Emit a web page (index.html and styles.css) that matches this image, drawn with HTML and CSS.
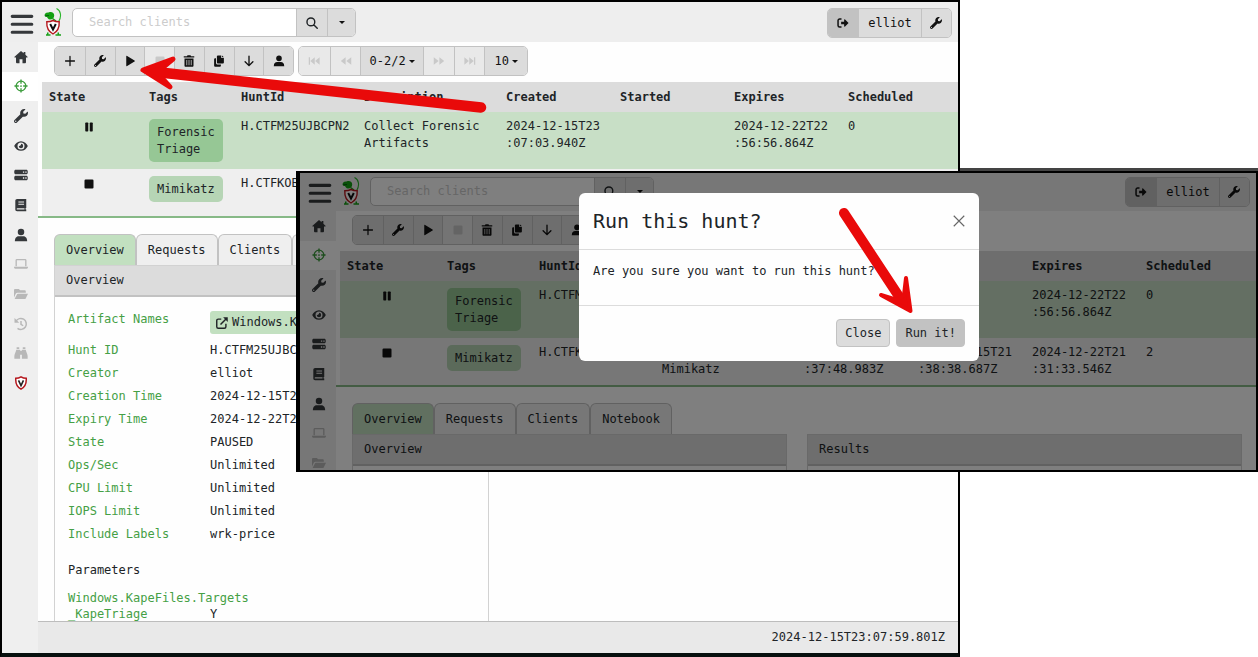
FILE: index.html
```html
<!DOCTYPE html>
<html lang="en">
<head>
<meta charset="utf-8">
<title>Velociraptor hunts</title>
<link rel="stylesheet" href="styles.css">
</head>
<body>
<svg class="sprite" aria-hidden="true">
  <symbol id="i-home" viewBox="0 0 16 16"><path d="M8 1 .6 7.700c-.4.5-.1 1 .5 1h1.200V14c0 .6.4 1 1 1h3v-4.500h3.400V15h3c.6 0 1-.4 1-1V8.700h1.200c.6 0 .9-.5.5-1L13 5.300V2.200h-2v1.400z"/></symbol>
  <symbol id="i-target" viewBox="0 0 16 16"><g fill="none" stroke="currentColor" stroke-width="1.500"><circle cx="8" cy="8" r="5.500"/><path d="M8 .5v5M8 10.500v5M.5 8h5M10.500 8h5"/></g><circle cx="8" cy="8" r="1"/></symbol>
  <symbol id="i-wrench" viewBox="0 0 512 512"><path fill-rule="evenodd" d="M507.730 109.100c-2.240-9.030-13.540-12.090-20.120-5.510l-74.360 74.360-67.880-11.310-11.310-67.880 74.360-74.360c6.620-6.620 3.430-17.900-5.660-20.160-47.380-11.740-99.550.91-136.580 37.930-39.640 39.640-50.550 97.100-34.050 147.200L18.740 402.760c-24.990 24.990-24.990 65.510 0 90.500 24.990 24.990 65.510 24.990 90.500 0l213.210-213.210c50.120 16.710 107.470 5.680 147.370-34.220 37.070-37.070 49.700-89.320 37.910-136.730zM64 472c-13.250 0-24-10.750-24-24s10.750-24 24-24 24 10.740 24 24-10.750 24-24 24z"/></symbol>
  <symbol id="i-eye" viewBox="0 0 16 16"><path fill-rule="evenodd" d="M8 2.500C4.300 2.500 1.500 5 .2 8c1.300 3 4.100 5.500 7.800 5.500S14.500 11 15.800 8C14.500 5 11.700 2.500 8 2.500zM8 4a4 4 0 1 1 0 8 4 4 0 0 1 0-8zM8 5.500c.2 1.600-.8 2.700-2.500 2.500A2.500 2.500 0 1 0 8 5.500z"/></symbol>
  <symbol id="i-server" viewBox="0 0 16 16"><path fill-rule="evenodd" d="M2 2h12c1 0 1.700.7 1.700 1.700v1.800c0 1-.7 1.700-1.700 1.700H2C1 7.200.3 6.500.3 5.500V3.700C.3 2.700 1 2 2 2zm8.200 1.900v1.500h1.500V3.900zm2.700 0v1.500h1.500V3.900zM2 8.800h12c1 0 1.700.7 1.700 1.700v1.800c0 1-.7 1.700-1.700 1.700H2c-1 0-1.700-.7-1.700-1.700v-1.800c0-1 .7-1.700 1.700-1.700zm8.200 1.900v1.500h1.500v-1.500zm2.700 0v1.500h1.500v-1.500z"/></symbol>
  <symbol id="i-book" viewBox="0 0 16 16"><path fill-rule="evenodd" d="M3.500 1H14v10.500h-.7V13h.7v2H3.500C2.300 15 1.500 14 1.500 13V3c0-1.100.9-2 2-2zM5 4v1.200h6.500V4zm0 2.500v1.200h6.500V6.500zM3.800 11.600c-1 0-1 1.600 0 1.600h8.200v-1.600z"/></symbol>
  <symbol id="i-user" viewBox="0 0 16 16"><circle cx="8" cy="4.500" r="3.700"/><path d="M1 15c0-4 2-5.600 4.500-5.600h5C13 9.400 15 11 15 15z"/></symbol>
  <symbol id="i-laptop" viewBox="0 0 16 16"><path d="M2.500 10.500V3.800c0-.5.3-.8.8-.8h9.400c.5 0 .8.3.8.8v6.700" fill="none" stroke="currentColor" stroke-width="1.500"/><path d="M0 11h16v.8c0 1-.8 1.700-1.700 1.700H1.700C.8 13.500 0 12.800 0 11.800z"/></symbol>
  <symbol id="i-folder" viewBox="0 0 16 16"><path d="M0 12V3.500c0-.8.6-1.300 1.300-1.300H5.500L7 3.800h5.200c.7 0 1.300.5 1.300 1.300v1.400H4c-.9 0-1.600.5-2 1.200zM.7 13.800 3.300 8.500c.2-.5.6-.8 1.200-.8H16l-2.600 5.300c-.2.5-.7.8-1.300.8z"/></symbol>
  <symbol id="i-history" viewBox="0 0 16 16"><path d="M2.200 5A6.300 6.300 0 1 1 4 13M8 4.500V8.300l2.500 1.700" fill="none" stroke="currentColor" stroke-width="1.700"/><path d="M.6 1v5.500H6z"/></symbol>
  <symbol id="i-bino" viewBox="0 0 16 16"><path d="M3 1.500h3v2H3zM10 1.500h3v2h-3zM2.600 4.200h3.800c.3 0 .6.3.6.6V14.500H.4v-3C.6 9 2 7 2.600 4.200zM13.400 4.200H9.600c-.3 0-.6.3-.6.6V14.500h6.600v-3c-.2-2.500-1.600-4.500-2.200-7.300zM7 5.500h2v4.500H7z"/></symbol>
  <symbol id="i-shield" viewBox="0 0 16 16"><path d="M8 1c2 1.300 4 1.700 6 1.700.3 5.300-1.500 10-6 12.300C3.500 12.700 1.700 8 2 2.700 4 2.700 6 2.300 8 1z" fill="#fff" stroke="#b5171d" stroke-width="1.700"/><path d="m5.200 5 2.800 6 2.800-6" fill="none" stroke="#222" stroke-width="1.800"/></symbol>
  <symbol id="i-plus" viewBox="0 0 16 16"><path d="M8 2v12M2 8h12" fill="none" stroke="currentColor" stroke-width="1.700" stroke-linecap="round"/></symbol>
  <symbol id="i-play" viewBox="0 0 16 16"><path d="M3 1.800v12.400c0 .6.600 1 1.200.6l9.800-6c.6-.4.6-1.200 0-1.600l-9.800-6C3.600.8 3 1.200 3 1.800z"/></symbol>
  <symbol id="i-stop" viewBox="0 0 16 16"><rect x="2" y="2" width="12" height="12" rx="1.500"/></symbol>
  <symbol id="i-pause" viewBox="0 0 16 16"><rect x="3" y="2" width="4" height="12" rx="1"/><rect x="9" y="2" width="4" height="12" rx="1"/></symbol>
  <symbol id="i-trash" viewBox="0 0 16 16"><path fill-rule="evenodd" d="M1 1.500h4.300L6 .3h4l.7 1.200H15v1.800H1zM2 4.500h12v9.800c0 .9-.6 1.500-1.500 1.500h-9C2.600 15.800 2 15.200 2 14.300zm2.600 2v7.300h1V6.500zm2.900 0v7.300h1V6.500zm2.900 0v7.300h1V6.500z"/></symbol>
  <symbol id="i-copy" viewBox="0 0 16 16"><path d="M6.500.5H11V4h3.500v6c0 .8-.5 1.300-1.300 1.300H6.500c-.8 0-1.300-.5-1.300-1.300V1.800C5.200 1 5.700.5 6.500.5zM12 .5 14.500 3H12zM1.500 5.700c0-.8.5-1.300 1.300-1.300H4V10.500c0 1.100.9 2 2 2h4.500v1.700c0 .8-.5 1.300-1.300 1.300H2.800c-.8 0-1.300-.5-1.300-1.300z"/></symbol>
  <symbol id="i-down" viewBox="0 0 16 16"><path d="M8 1.500v12.500M2.800 9 8 14.200 13.200 9" fill="none" stroke="currentColor" stroke-width="1.800" stroke-linecap="round"/></symbol>
  <symbol id="i-search" viewBox="0 0 16 16"><path d="M6.500 1.300a5.200 5.200 0 1 1 0 10.400 5.200 5.200 0 0 1 0-10.400zM10.300 10.300 15 15" fill="none" stroke="currentColor" stroke-width="1.900" stroke-linecap="round"/></symbol>
  <symbol id="i-exit" viewBox="0 0 16 16"><path d="M6 2.700H3.500C2.300 2.700 1.400 3.500 1.400 4.700v6.600c0 1.200.9 2 2.100 2H6" fill="none" stroke="currentColor" stroke-width="2"/><path d="M5.500 6.400h4V4c0-.8.8-1.100 1.300-.6L15.400 8l-4.600 4.600c-.5.5-1.300.2-1.300-.6V9.600h-4z"/></symbol>
  <symbol id="i-first" viewBox="0 0 16 16"><path d="M1 3h1.700v10H1zM9 3v10L3 8zM15.500 3v10l-6-5z"/></symbol>
  <symbol id="i-prev" viewBox="0 0 16 16"><path d="M7.500 3v10l-6.500-5zM15 3v10L8.500 8z"/></symbol>
  <symbol id="i-next" viewBox="0 0 16 16"><path d="M8.500 3v10L15 8zM1 3v10l6.500-5z"/></symbol>
  <symbol id="i-last" viewBox="0 0 16 16"><path d="M15 3h-1.700v10H15zM7 3v10l6-5zM.5 3v10l6-5z"/></symbol>
  <symbol id="i-external" viewBox="0 0 16 16"><path d="M7 2.800H3C1.800 2.800 1 3.600 1 4.800V13c0 1.200.8 2 2 2h8.200c1.200 0 2-.8 2-2V9M6 10l8-8" fill="none" stroke="currentColor" stroke-width="1.900"/><path d="M9.500.3h6.200v6.200z"/></symbol>
  <symbol id="i-close" viewBox="0 0 16 16"><path d="m2 2 12 12M14 2 2 14" fill="none" stroke="currentColor" stroke-width="1.300"/></symbol>
  <symbol id="i-menu" viewBox="0 0 22 20"><path d="M2 3h18M2 10.200h18M2 17.500h18" fill="none" stroke="currentColor" stroke-width="2.800" stroke-linecap="round"/></symbol>
  <symbol id="i-logo" viewBox="0 0 18 28"><path d="M12.500.5c4.500 2 5.200 8 2.200 13" fill="none" stroke="#2bb52b" stroke-width="1.100"/><path d="M.6 7C1 4.500 3.500 4.600 5 4.200c3-.7 5.300.6 5.200 3.300 0 2.700-2 4.100-4.300 4C4.200 11.400 3.500 10 3 9 1.500 9 .4 8.500.6 7z" fill="#12a012"/><path d="M1.200 7.700 5 7.500" stroke="#064e12" stroke-width=".8"/><path d="M8.500 10.500 12 13M4 24.500l-.5 2M14 24.500l.5 2M2 27h4.500M11.500 27h5.500" fill="none" stroke="#19a019" stroke-width="1.500"/><path d="M9 12.500c2 1 4 1.300 6.200 1.300.3 5.200-1.700 9.800-6.200 12.200-4.500-2.400-6.500-7-6.200-12.200C5 13.800 7 13.500 9 12.500z" fill="#fff" stroke="#b5171d" stroke-width="1.400"/><path d="m6.200 16 2.800 5.500 2.800-5.500" fill="none" stroke="#111" stroke-width="2"/></symbol>
</svg>

<main class="desktop">
  <section class="window window-back" aria-label="Hunt manager">
    <header class="topbar">
      <button class="plain" aria-label="Menu"><svg class="menu-icon"><use href="#i-menu"/></svg></button>
      <svg class="logo"><use href="#i-logo"/></svg>
      <form class="search">
        <input type="text" placeholder="Search clients" aria-label="Search clients">
        <button type="button" aria-label="Search"><svg class="icon"><use href="#i-search"/></svg></button>
        <button type="button" class="narrow" aria-label="Search options"><span class="caret"></span></button>
      </form>
      <div class="group account">
        <button class="dark" aria-label="Log out"><svg class="icon"><use href="#i-exit"/></svg></button>
        <button class="wide">elliot</button>
        <button aria-label="Settings"><svg class="icon"><use href="#i-wrench"/></svg></button>
      </div>
    </header>
    <div class="body">
      <nav class="sidebar">
        <div class="links">
          <a href="#" aria-label="Home"><svg class="icon"><use href="#i-home"/></svg></a>
          <a href="#" class="active" aria-label="Hunts"><svg class="icon"><use href="#i-target"/></svg></a>
          <a href="#" aria-label="Artifacts"><svg class="icon"><use href="#i-wrench"/></svg></a>
          <a href="#" aria-label="Events"><svg class="icon"><use href="#i-eye"/></svg></a>
          <a href="#" aria-label="Server"><svg class="icon"><use href="#i-server"/></svg></a>
          <a href="#" aria-label="Notebooks"><svg class="icon"><use href="#i-book"/></svg></a>
          <a href="#" aria-label="Users"><svg class="icon"><use href="#i-user"/></svg></a>
          <a href="#" class="off" aria-label="Host"><svg class="icon"><use href="#i-laptop"/></svg></a>
          <a href="#" class="off" aria-label="Files"><svg class="icon"><use href="#i-folder"/></svg></a>
          <a href="#" class="off" aria-label="History"><svg class="icon"><use href="#i-history"/></svg></a>
          <a href="#" class="off" aria-label="Monitoring"><svg class="icon"><use href="#i-bino"/></svg></a>
          <a href="#" aria-label="About"><svg class="icon"><use href="#i-shield"/></svg></a>
        </div>
      </nav>
      <div class="content">
        <div class="toolbar">
          <div class="group">
            <button aria-label="New hunt"><svg class="icon"><use href="#i-plus"/></svg></button>
            <button aria-label="Modify hunt"><svg class="icon"><use href="#i-wrench"/></svg></button>
            <button aria-label="Run hunt"><svg class="icon"><use href="#i-play"/></svg></button>
            <button disabled aria-label="Stop hunt"><svg class="icon"><use href="#i-stop"/></svg></button>
            <button aria-label="Delete hunt"><svg class="icon"><use href="#i-trash"/></svg></button>
            <button aria-label="Copy hunt"><svg class="icon"><use href="#i-copy"/></svg></button>
            <button aria-label="Download"><svg class="icon"><use href="#i-down"/></svg></button>
            <button aria-label="Owner"><svg class="icon"><use href="#i-user"/></svg></button>
          </div>
          <div class="group pager">
            <button disabled aria-label="First page"><svg class="icon"><use href="#i-first"/></svg></button>
            <button disabled aria-label="Previous page"><svg class="icon"><use href="#i-prev"/></svg></button>
            <button class="wide">0-2/2<span class="caret"></span></button>
            <button disabled aria-label="Next page"><svg class="icon"><use href="#i-next"/></svg></button>
            <button disabled aria-label="Last page"><svg class="icon"><use href="#i-last"/></svg></button>
            <button class="size">10<span class="caret"></span></button>
          </div>
        </div>
        <div class="table-wrap">
          <table>
            <colgroup><col class="c-state"><col class="c-tags"><col class="c-id"><col class="c-desc"><col class="c-time"><col class="c-time"><col class="c-time"><col></colgroup>
            <thead><tr><th>State</th><th>Tags</th><th>HuntId</th><th>Description</th><th>Created</th><th>Started</th><th>Expires</th><th>Scheduled</th></tr></thead>
            <tbody>
              <tr class="selected"><td class="state"><svg class="icon"><use href="#i-pause"/></svg></td><td><span class="tag strong">Forensic<br>Triage</span></td><td>H.CTFM25UJBCPN2</td><td>Collect Forensic<br>Artifacts</td><td>2024-12-15T23<br>:07:03.940Z</td><td></td><td>2024-12-22T22<br>:56:56.864Z</td><td>0</td></tr>
              <tr><td class="state"><svg class="icon"><use href="#i-stop"/></svg></td><td><span class="tag">Mimikatz</span></td><td>H.CTFKOB</td><td><br>Mimikatz</td><td><br>:37:48.983Z</td><td>2024-12-15T21<br>:38:38.687Z</td><td>2024-12-22T21<br>:31:33.546Z</td><td>2</td></tr>
            </tbody>
          </table>
        </div>
        <div class="details">
          <div class="tabs" role="tablist">
            <button role="tab" aria-selected="true">Overview</button><button role="tab">Requests</button><button role="tab">Clients</button><button role="tab">Notebook</button>
          </div>
          <div class="cards">
            <section class="card">
              <h2>Overview</h2>
              <dl>
                <dt>Artifact Names</dt><dd class="artifact"><button><svg class="icon"><use href="#i-external"/></svg>Windows.Ka</button></dd>
                <dt>Hunt ID</dt><dd>H.CTFM25UJBCPN2</dd>
                <dt>Creator</dt><dd>elliot</dd>
                <dt>Creation Time</dt><dd>2024-12-15T23</dd>
                <dt>Expiry Time</dt><dd>2024-12-22T22</dd>
                <dt>State</dt><dd>PAUSED</dd>
                <dt>Ops/Sec</dt><dd>Unlimited</dd>
                <dt>CPU Limit</dt><dd>Unlimited</dd>
                <dt>IOPS Limit</dt><dd>Unlimited</dd>
                <dt>Include Labels</dt><dd>wrk-price</dd>
              </dl>
              <h3>Parameters</h3>
              <dl class="params"><dt>Windows.KapeFiles.Targets<br>_KapeTriage</dt><dd>Y</dd></dl>
            </section>
            <section class="card short"><h2>Results</h2></section>
          </div>
        </div>
        <footer class="status">2024-12-15T23:07:59.801Z</footer>
      </div>
    </div>
  </section>

  <section class="window window-front" aria-label="Run hunt confirmation">
    <header class="topbar">
      <button class="plain" aria-label="Menu"><svg class="menu-icon"><use href="#i-menu"/></svg></button>
      <svg class="logo"><use href="#i-logo"/></svg>
      <form class="search">
        <input type="text" placeholder="Search clients" aria-label="Search clients">
        <button type="button" aria-label="Search"><svg class="icon"><use href="#i-search"/></svg></button>
        <button type="button" class="narrow" aria-label="Search options"><span class="caret"></span></button>
      </form>
      <div class="group account">
        <button class="dark" aria-label="Log out"><svg class="icon"><use href="#i-exit"/></svg></button>
        <button class="wide">elliot</button>
        <button aria-label="Settings"><svg class="icon"><use href="#i-wrench"/></svg></button>
      </div>
    </header>
    <div class="body">
      <nav class="sidebar">
        <div class="links">
          <a href="#" aria-label="Home"><svg class="icon"><use href="#i-home"/></svg></a>
          <a href="#" class="active" aria-label="Hunts"><svg class="icon"><use href="#i-target"/></svg></a>
          <a href="#" aria-label="Artifacts"><svg class="icon"><use href="#i-wrench"/></svg></a>
          <a href="#" aria-label="Events"><svg class="icon"><use href="#i-eye"/></svg></a>
          <a href="#" aria-label="Server"><svg class="icon"><use href="#i-server"/></svg></a>
          <a href="#" aria-label="Notebooks"><svg class="icon"><use href="#i-book"/></svg></a>
          <a href="#" aria-label="Users"><svg class="icon"><use href="#i-user"/></svg></a>
          <a href="#" class="off" aria-label="Host"><svg class="icon"><use href="#i-laptop"/></svg></a>
          <a href="#" class="off" aria-label="Files"><svg class="icon"><use href="#i-folder"/></svg></a>
        </div>
      </nav>
      <div class="content">
        <div class="toolbar">
          <div class="group">
            <button aria-label="New hunt"><svg class="icon"><use href="#i-plus"/></svg></button>
            <button aria-label="Modify hunt"><svg class="icon"><use href="#i-wrench"/></svg></button>
            <button aria-label="Run hunt"><svg class="icon"><use href="#i-play"/></svg></button>
            <button disabled aria-label="Stop hunt"><svg class="icon"><use href="#i-stop"/></svg></button>
            <button aria-label="Delete hunt"><svg class="icon"><use href="#i-trash"/></svg></button>
            <button aria-label="Copy hunt"><svg class="icon"><use href="#i-copy"/></svg></button>
            <button aria-label="Download"><svg class="icon"><use href="#i-down"/></svg></button>
            <button aria-label="Owner"><svg class="icon"><use href="#i-user"/></svg></button>
          </div>
        </div>
        <div class="table-wrap">
          <table>
            <colgroup><col class="c-state"><col class="c-tags"><col class="c-id"><col class="c-desc"><col class="c-time"><col class="c-time"><col class="c-time"><col></colgroup>
            <thead><tr><th>State</th><th>Tags</th><th>HuntId</th><th></th><th></th><th></th><th>Expires</th><th>Scheduled</th></tr></thead>
            <tbody>
              <tr class="selected"><td class="state"><svg class="icon"><use href="#i-pause"/></svg></td><td><span class="tag strong">Forensic<br>Triage</span></td><td>H.CTFM25UJBCPN2</td><td></td><td></td><td></td><td>2024-12-22T22<br>:56:56.864Z</td><td>0</td></tr>
              <tr><td class="state"><svg class="icon"><use href="#i-stop"/></svg></td><td><span class="tag">Mimikatz</span></td><td>H.CTFKOB</td><td><br>Mimikatz</td><td><br>:37:48.983Z</td><td>2024-12-15T21<br>:38:38.687Z</td><td>2024-12-22T21<br>:31:33.546Z</td><td>2</td></tr>
            </tbody>
          </table>
        </div>
        <div class="details">
          <div class="tabs" role="tablist">
            <button role="tab" aria-selected="true">Overview</button><button role="tab">Requests</button><button role="tab">Clients</button><button role="tab">Notebook</button>
          </div>
          <div class="cards">
            <section class="card"><h2>Overview</h2></section>
            <section class="card"><h2>Results</h2></section>
          </div>
        </div>
      </div>
    </div>
    <div class="backdrop">
      <div class="modal" role="dialog" aria-labelledby="modal-title">
        <div class="modal-head"><h1 id="modal-title">Run this hunt?</h1><button class="plain" aria-label="Dismiss"><svg><use href="#i-close"/></svg></button></div>
        <p>Are you sure you want to run this hunt?</p>
        <div class="modal-foot"><button>Close</button><button class="primary">Run it!</button></div>
      </div>
    </div>
  </section>

  <svg class="arrows" aria-hidden="true">
    <g fill="#e90a0a" stroke="#e90a0a" stroke-linecap="round" stroke-linejoin="round">
      <path d="M481 107.500 165 73" stroke-width="10.500"/>
      <path d="M143 70 173 59 161 69 161 77 170 87z" stroke-width="5"/>
      <path d="m844 213 56 85" stroke-width="10"/>
      <path d="M910.500 311 881 295 897 300 904 295 906 278z" stroke-width="4"/>
    </g>
  </svg>
</main>
</body>
</html>
```

FILE: styles.css
```css
* { box-sizing: border-box; }

body {
  margin: 0;
  background: #fff;
  color: #202427;
  font: 12px/17px "DejaVu Sans Mono", "Liberation Mono", monospace;
}

button, input { font: inherit; color: inherit; }
button { padding: 0; border: 0; background: #dcdcdc; }
h1, h2, h3, p, dl, dd { margin: 0; font-weight: 400; }
svg { display: block; fill: currentColor; }
.sprite { position: absolute; width: 0; height: 0; }
.icon { width: 12px; height: 12px; flex: none; }
.plain { background: none; }

/* Two overlapping windows on a free canvas */
.desktop { position: relative; min-height: 100vh; overflow: hidden; }
.window { position: absolute; display: flex; flex-direction: column; background: #fefefe; border: 2px solid #000; }
.window-back { inset: 0 298px 0 0; border-bottom: 4px solid #07100e; }
.window-front { inset: 171px 0 185px 296px; border-left-width: 4px; }
.window-front::before { content: ""; position: absolute; top: -5px; left: 660px; right: -2px; height: 3px; background: #444; }
.window-front .topbar { padding-top: 4px; height: 38px; }

.topbar { display: flex; align-items: flex-start; flex: none; height: 40px; padding: 6px 6px 0 8px; background: #eee; }
.menu-icon { width: 24px; height: 22px; margin-top: 5px; color: #35383b; }
.logo { width: 18px; height: 28px; margin: 0 10px; }
.search { display: flex; height: 29px; width: 284px; border: 1px solid #c2c2c2; border-radius: 5px; overflow: hidden; background: #fff; }
.search input { flex: 1; min-width: 0; border: 0; padding: 0 16px; background: none; }
.search input::placeholder { color: #ccc; opacity: 1; }
.search button { display: grid; place-items: center; width: 31px; border-left: 1px solid #c2c2c2; }
.search .narrow { width: 28px; }

.group { display: flex; height: 30px; border: 1px solid #c2c2c2; border-radius: 5px; overflow: hidden; }
.group button { display: flex; align-items: center; justify-content: center; flex: 1 1 30px; gap: 3px; color: #111; }
.group button + button { border-left: 1px solid #c2c2c2; }
.group button:disabled { background: #e9e9e9; color: #c9c9c9; }
.account { width: 125px; margin-left: auto; }
.group .wide { flex-basis: 62px; }
.group .size { flex-basis: 42px; }
.account .dark { background: #c2c2c2; }
.caret { border: 3px solid transparent; border-top-color: #111; border-bottom: 0; }

.body { display: flex; flex: 1; min-height: 0; overflow: hidden; }
.sidebar { flex: none; width: 36px; background: #efefef; }
.links { display: grid; grid-template-rows: repeat(12, 1fr); height: 356px; }
.sidebar a { display: grid; align-items: center; padding-left: 12px; color: #35383b; }
.sidebar .icon { width: 14px; height: 14px; }
.sidebar .active { background: #fff; color: #3b9c3b; }
.sidebar .off { color: #b8b8b8; }

.content { display: flex; flex-direction: column; flex: 1; min-width: 0; }
.toolbar { display: flex; flex: none; gap: 4px; padding: 4px 16px 6px; }
.toolbar .group { width: 240px; }
.toolbar .pager { width: 230px; }

.table-wrap { flex: none; padding-left: 4px; border-bottom: 2px solid #87b987; }
table { width: 100%; table-layout: fixed; border-collapse: collapse; }
.c-state { width: 100px; }
.c-tags { width: 92px; }
.c-id { width: 123px; }
.c-desc { width: 142px; }
.c-time { width: 114px; }
th, td { padding: 6px 7px 7px; text-align: left; vertical-align: top; white-space: nowrap; background: #efefef; }
th { padding: 7px 7px 6px; background: #dcdcdc; }
.selected td { background: #c8dfc6; }
.state { padding-right: 14px; }
.state .icon { margin: 3px auto 0; color: #111; }
.tag { display: block; width: fit-content; margin-top: 1px; padding: 5px 8px 4px; border-radius: 5px; background: #b6d5b5; }
.tag.strong { background: #96c795; }

.details { display: flex; flex-direction: column; flex: 1; min-height: 0; padding: 16px 14px 0 16px; overflow: hidden; }
.tabs { display: flex; flex: none; }
.tabs button { height: 31px; padding: 0 11px; border: 1px solid #c2c2c2; border-bottom: 0; border-radius: 6px 6px 0 0; background: #efefef; }
.tabs [aria-selected="true"] { background: #c2e0c0; }
.cards { display: grid; grid-template-columns: 1fr 1fr; gap: 20px; flex: 1; min-height: 0; }
.card { border: 1px solid #d2d2d2; border-bottom: 0; }
.card.short { align-self: start; }
.card h2 { padding: 6px 11px; border-bottom: 2px solid #c2c2c2; background: #dcdcdc; font-size: 12px; line-height: 17px; }
.card dl { display: grid; grid-template-columns: 142px 1fr; grid-auto-rows: 23px; padding: 14px 13px 0; white-space: nowrap; }
.card dt { color: #45a045; }
.card dl:not(.params) { grid-template-rows: 31px; }
.artifact button { display: flex; align-items: center; gap: 4px; height: 23px; width: 100%; padding: 0 6px; border-radius: 3px; background: #c2e0c0; }
.card h3 { padding: 13px 13px 0; font-size: 12px; line-height: 17px; }
.card .params { padding-top: 11px; line-height: 16px; grid-auto-rows: auto; }
.params dd { align-self: end; }

.status { flex: none; padding: 7px 13px 7px; border-top: 1px solid #bdbdbd; background: #e9e9e9; text-align: right; }

.backdrop { position: absolute; inset: 0; display: flex; align-items: flex-start; justify-content: center; padding: 20px 0 0 2px; background: rgba(0, 0, 0, .5); }
.modal { width: 400px; border-radius: 6px; background: #fefefe; }
.modal-head { display: flex; align-items: center; justify-content: space-between; height: 57px; padding: 0 13px 0 14px; border-bottom: 1px solid #dcdcdc; }
.modal-head h1 { font-size: 20px; line-height: 28px; }
.modal-head svg { width: 14px; height: 14px; color: #666; }
.modal p { height: 55px; padding: 13px 14px; }
.modal-foot { display: flex; justify-content: flex-end; gap: 6px; padding: 13px 14px 14px; border-top: 1px solid #dcdcdc; }
.modal-foot button { height: 28px; padding: 0 8px; border: 1px solid #c2c2c2; border-radius: 4px; }
.modal-foot .primary { background: #c2c2c2; }

.arrows { position: absolute; inset: 0; width: 100%; height: 100%; pointer-events: none; }
```
